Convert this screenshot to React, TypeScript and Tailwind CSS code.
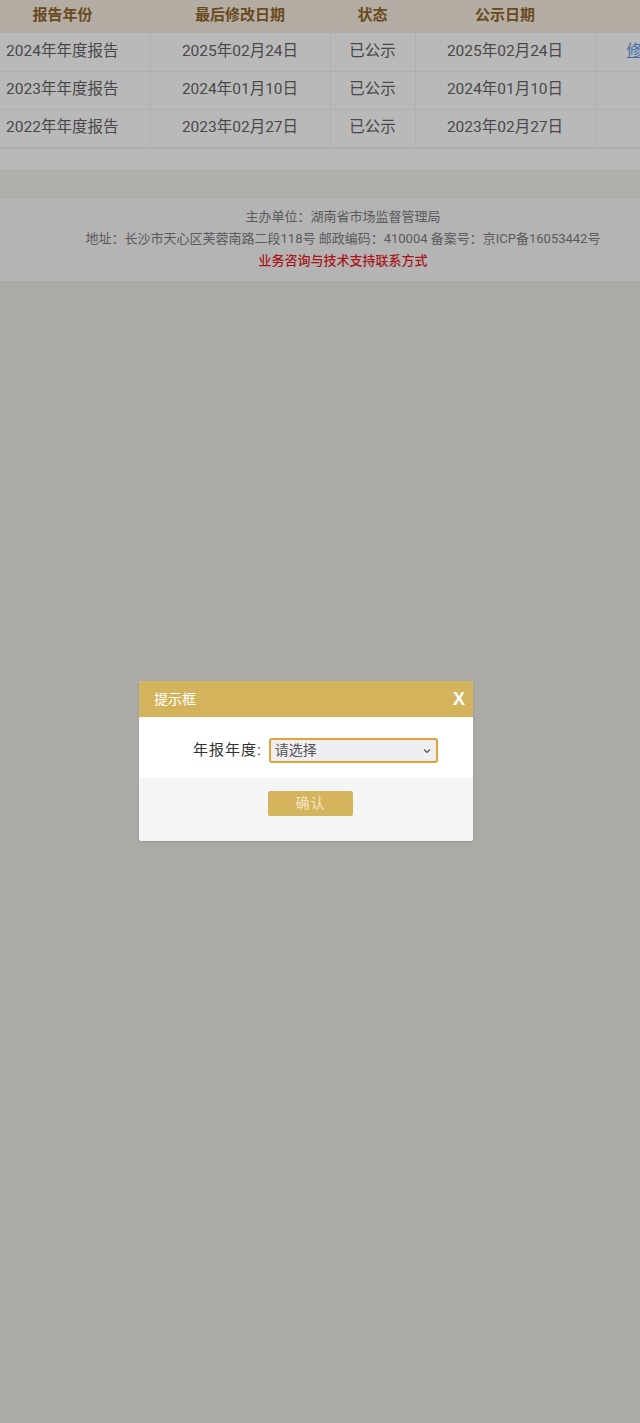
const rows = [
  { year: "2024年年度报告", modified: "2025年02月24日", status: "已公示", pub: "2025年02月24日", edit: true },
  { year: "2023年年度报告", modified: "2024年01月10日", status: "已公示", pub: "2024年01月10日", edit: false },
  { year: "2022年年度报告", modified: "2023年02月27日", status: "已公示", pub: "2023年02月27日", edit: false },
];

const font = "font-['Roboto','Noto_Sans_CJK_SC',sans-serif]";

export default function App() {
  return (
    <div className={`relative w-[640px] min-h-[1423px] bg-[#acaaa6] ${font}`}>
      {/* report table */}
      <div className="overflow-hidden">
        <table className="ml-[-25px] border-collapse table-fixed w-[720px]">
          <thead>
            <tr className="h-[33px] bg-[#b3ada4] text-[#6a4a1c] text-[15px] font-bold">
              <th className="w-[175px] font-bold pb-[3px]">报告年份</th>
              <th className="w-[180px] font-bold pb-[3px]">最后修改日期</th>
              <th className="w-[85px] font-bold pb-[3px]">状态</th>
              <th className="w-[180px] font-bold pb-[3px]">公示日期</th>
              <th className="w-[100px]"></th>
            </tr>
          </thead>
          <tbody className="bg-[#b9b9b9] text-[#484848] text-[15.5px]">
            {rows.map((r) => (
              <tr key={r.year} className="h-[38px] border-b border-[#b0b0b0]">
                <td className="text-center border-r border-[#b0b0b0]">{r.year}</td>
                <td className="text-center border-r border-[#b0b0b0]">{r.modified}</td>
                <td className="text-center border-r border-[#b0b0b0]">{r.status}</td>
                <td className="text-center border-r border-[#b0b0b0]">{r.pub}</td>
                <td className="pl-[31px]">
                  {r.edit && <span className="text-[#3f6fa8] underline">修改</span>}
                </td>
              </tr>
            ))}
          </tbody>
        </table>
      </div>

      <div className="h-[22px] bg-[#b8b8b8] border-t border-[#aeaeae]" />
      <div className="h-[28px] bg-[#b0afaa] border-t border-[#a9a8a3] border-b border-[#a8a7a2]" />

      {/* footer */}
      <div className="h-[83px] bg-[#b4b4b4] flex flex-col items-center pl-[46px] pt-[8px] text-[13px] leading-[22px] text-[#5a5a5a]">
        <p>主办单位：湖南省市场监督管理局</p>
        <p>地址：长沙市天心区芙蓉南路二段118号 邮政编码：410004 备案号：京ICP备16053442号</p>
        <p className="text-[#a8161a] font-medium">业务咨询与技术支持联系方式</p>
      </div>

      {/* dialog */}
      <div className="absolute left-[139px] top-[681px] w-[334px] rounded-[3px] overflow-hidden bg-white shadow-sm">
        <div className="h-[36px] bg-[#d3b45d] flex items-center justify-between pl-[15px] pr-[8px] text-white">
          <span className="text-[14px]">提示框</span>
          <span className="text-[18px] font-bold font-['Liberation_Sans',sans-serif]">X</span>
        </div>
        <div className="h-[61px] flex items-center pl-[54px] pt-[6px] gap-[7px]">
          <span className="text-[15px] text-[#333] tracking-[1px]">年报年度:</span>
          <div className="w-[169px] h-[25px] rounded-[3px] border-2 border-[#dfa43c] bg-[#efeef1] flex items-center justify-between pl-[4px] pr-[4px]">
            <span className="text-[14px] text-[#555]">请选择</span>
            <svg width="10" height="10" viewBox="0 0 10 10" fill="none" stroke="#555" strokeWidth="1.2">
              <path d="M2 3.5 L5 6.5 L8 3.5" />
            </svg>
          </div>
        </div>
        <div className="h-[63px] bg-[#f5f5f5] flex justify-center pt-[13px]">
          <div className="ml-[9px] w-[85px] h-[25px] rounded-[2px] bg-[#d4b45d] flex items-center justify-center text-[14px] text-[#f4e6c4] tracking-[1px]">
            确认
          </div>
        </div>
      </div>
    </div>
  );
}
